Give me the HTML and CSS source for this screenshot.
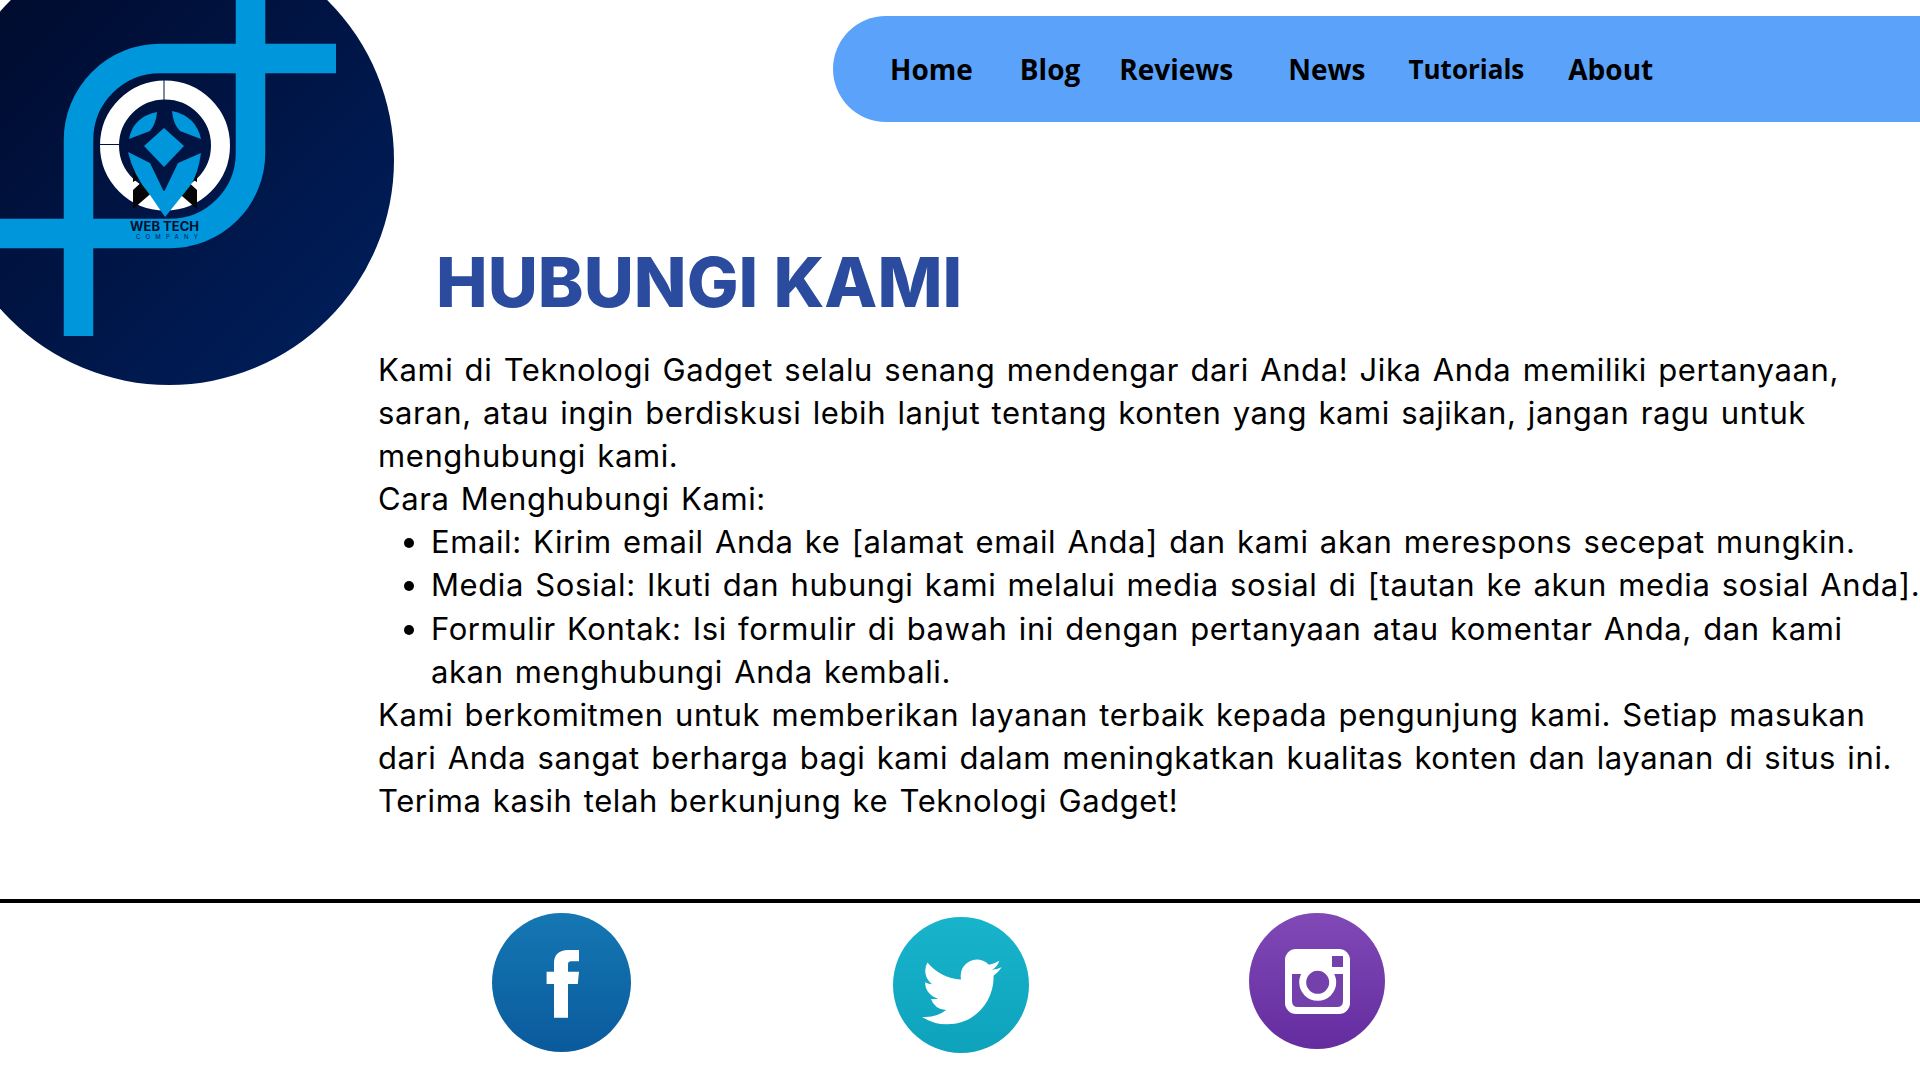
FILE: index.html
```html
<!DOCTYPE html>
<html lang="id">
<head>
<meta charset="utf-8">
<title>Hubungi Kami</title>
<link rel="stylesheet" href="styles.css">
</head>
<body>
<svg class="logo" viewBox="0 0 400 390" width="400" height="390" aria-label="Web Tech Company">
  <defs>
    <linearGradient id="lg" x1="0" y1="0" x2="1" y2="1">
      <stop offset="0" stop-color="#000827"/>
      <stop offset="1" stop-color="#00205f"/>
    </linearGradient>
  </defs>
  <circle cx="169" cy="160" r="225" fill="url(#lg)"/>
  <g fill="none" stroke="#0096dc" stroke-width="29.5">
    <path d="M78.5 336V140A81.5 81.5 0 0 1 160 58.5H336"/>
    <path d="M0 233.5H170A80.5 80.5 0 0 0 250.5 153V0"/>
  </g>
  <circle cx="165" cy="145.5" r="55.5" fill="none" stroke="#fff" stroke-width="19"/>
  <path d="M164 80V100M100 144.500H119" stroke="#001244" stroke-width="1" fill="none"/>
  <g fill="#0096dc">
    <path d="M164 128L184 146L164 167L144 146Z"/>
    <path d="M157 112Q133 117 129 139L150 131Q156 124 157 112Z"/>
    <path d="M172 111Q196 116 201 139L180 131Q173 124 172 111Z"/>
  </g>
  <g fill="#050505">
    <path d="M133 168L142 177L133 182Z"/>
    <path d="M133 190L146 178L155 190L133 209Z"/>
    <path d="M197 168L188 177L197 182Z"/>
    <path d="M197 190L184 178L175 190L197 209Z"/>
  </g>
  <path fill="#0096dc" d="M128 152L150 163L164 192L178 163L201 153Q198 175 190 186L165 217L150 195Q133 175 128 152Z"/>
  <text class="logo-name" x="130" y="231">WEB TECH</text>
  <text class="logo-sub" x="136" y="239">COMPANY</text>
</svg>

<header class="top">
  <nav class="nav">
    <a class="nav-home" href="#">Home</a>
    <a class="nav-blog" href="#">Blog</a>
    <a class="nav-reviews" href="#">Reviews</a>
    <a class="nav-news" href="#">News</a>
    <a class="nav-tutorials" href="#">Tutorials</a>
    <a class="nav-about" href="#">About</a>
  </nav>
</header>

<main class="content">
  <h1 class="title">HUBUNGI KAMI</h1>
  <div class="copy">
    <p>Kami di Teknologi Gadget selalu senang mendengar dari Anda! Jika Anda memiliki pertanyaan,<br>saran, atau ingin berdiskusi lebih lanjut tentang konten yang kami sajikan, jangan ragu untuk<br>menghubungi kami.</p>
    <p>Cara Menghubungi Kami:</p>
    <ul>
      <li>Email: Kirim email Anda ke [alamat email Anda] dan kami akan merespons secepat mungkin.</li>
      <li>Media Sosial: Ikuti dan hubungi kami melalui media sosial di [tautan ke akun media sosial Anda].</li>
      <li>Formulir Kontak: Isi formulir di bawah ini dengan pertanyaan atau komentar Anda, dan kami<br>akan menghubungi Anda kembali.</li>
    </ul>
    <p>Kami berkomitmen untuk memberikan layanan terbaik kepada pengunjung kami. Setiap masukan<br>dari Anda sangat berharga bagi kami dalam meningkatkan kualitas konten dan layanan di situs ini.<br>Terima kasih telah berkunjung ke Teknologi Gadget!</p>
  </div>
</main>

<footer class="foot">
  <a class="social social-fb" href="#" aria-label="Facebook">
    <svg viewBox="0 0 139 139" width="139" height="139">
      <defs><linearGradient id="fb" x1="0" y1="0" x2="0" y2="1"><stop offset="0" stop-color="#1577b3"/><stop offset="1" stop-color="#0a5a9c"/></linearGradient></defs>
      <circle cx="69.500" cy="69.500" r="69.500" fill="url(#fb)"/>
      <path fill="#fff" d="M62 104.700V71H54.600V58.700H62V50C62 42 67 37 76 37H87V48.300H79C77 48.300 76 49 76 52V58.700H87L85.800 71H76V104.700Z"/>
    </svg>
  </a>
  <a class="social social-tw" href="#" aria-label="Twitter">
    <svg viewBox="0 0 136 136" width="136" height="136">
      <defs><linearGradient id="tw" x1="0" y1="0" x2="0" y2="1"><stop offset="0" stop-color="#18b4cc"/><stop offset="1" stop-color="#0ea2bb"/></linearGradient></defs>
      <circle cx="68" cy="68" r="68" fill="url(#tw)"/>
      <path transform="translate(29 35) scale(3.32)" fill="#fff" d="M23.953 4.57a10 10 0 01-2.825.775 4.958 4.958 0 002.163-2.723c-.951.555-2.005.959-3.127 1.184a4.92 4.92 0 00-8.384 4.482C7.69 8.095 4.067 6.13 1.64 3.162a4.822 4.822 0 00-.666 2.475c0 1.71.87 3.213 2.188 4.096a4.904 4.904 0 01-2.228-.616v.06a4.923 4.923 0 003.946 4.827 4.996 4.996 0 01-2.212.085 4.936 4.936 0 004.604 3.417 9.867 9.867 0 01-6.102 2.105c-.39 0-.779-.023-1.17-.067a13.995 13.995 0 007.557 2.209c9.053 0 13.998-7.496 13.998-13.985 0-.21 0-.42-.015-.63A9.935 9.935 0 0024 4.59z"/>
    </svg>
  </a>
  <a class="social social-ig" href="#" aria-label="Instagram">
    <svg viewBox="0 0 136 136" width="136" height="136">
      <defs><linearGradient id="ig" x1="0" y1="0" x2="0" y2="1"><stop offset="0" stop-color="#8049b6"/><stop offset="1" stop-color="#642c9f"/></linearGradient></defs>
      <circle cx="68" cy="68" r="68" fill="url(#ig)"/>
      <rect x="36" y="36" width="65" height="65" rx="11" fill="#fff"/>
      <path d="M43 61H94V88Q94 94 88 94H49Q43 94 43 88Z" fill="#7440ac"/>
      <rect x="83" y="43" width="11" height="11" fill="#7440ac"/>
      <circle cx="68.700" cy="69.300" r="15" fill="#7440ac" stroke="#fff" stroke-width="7"/>
    </svg>
  </a>
</footer>
</body>
</html>
```
FILE: styles.css
```css
html, body { margin: 0; padding: 0; background: #fff; }
body { width: 1920px; height: 1080px; overflow: hidden; color: #000; font-family: "Inter", "Liberation Sans", sans-serif; }

.logo { position: absolute; left: 0; top: 0; }
.logo-name { font: 700 13px "Inter", sans-serif; fill: #00102f; }
.logo-sub { font: 400 6px "Inter", sans-serif; letter-spacing: 5.200px; fill: #001a52; }

.top { display: flex; justify-content: flex-end; padding-top: 16px; }
.nav {
  width: 1087px; height: 106px; box-sizing: border-box;
  display: flex; align-items: center; padding-left: 57px;
  background: #5aa2fa; border-radius: 53px 0 0 53px;
  font: 700 28px "Open Sans", sans-serif;
}
.nav a { color: #000; text-decoration: none; }
.nav-blog { margin-left: 47px; }
.nav-reviews { margin-left: 39px; }
.nav-news { margin-left: 55px; }
.nav-tutorials { margin-left: 43px; font-size: 26px; }
.nav-about { margin-left: 44px; }

.content { padding-left: 378px; }
.title {
  margin: 107px 0 0 58px; height: 119px;
  font: 800 69px/107px "Inter", sans-serif; color: #2b4b9f;
}
.copy { font-size: 31px; line-height: 43.100px; letter-spacing: 0.600px; word-spacing: 2px; white-space: nowrap; }
.copy p { margin: 0; }
.copy ul { margin: 0; padding-left: 53px; }

.foot { margin-top: 77px; border-top: 4px solid #000; display: flex; align-items: flex-start; padding: 10px 0 0 492px; }
.social { display: block; height: 139px; }
.social svg { display: block; }
.social-tw { margin: 4px 0 0 262px; }
.social-ig { margin-left: 220px; }
```
